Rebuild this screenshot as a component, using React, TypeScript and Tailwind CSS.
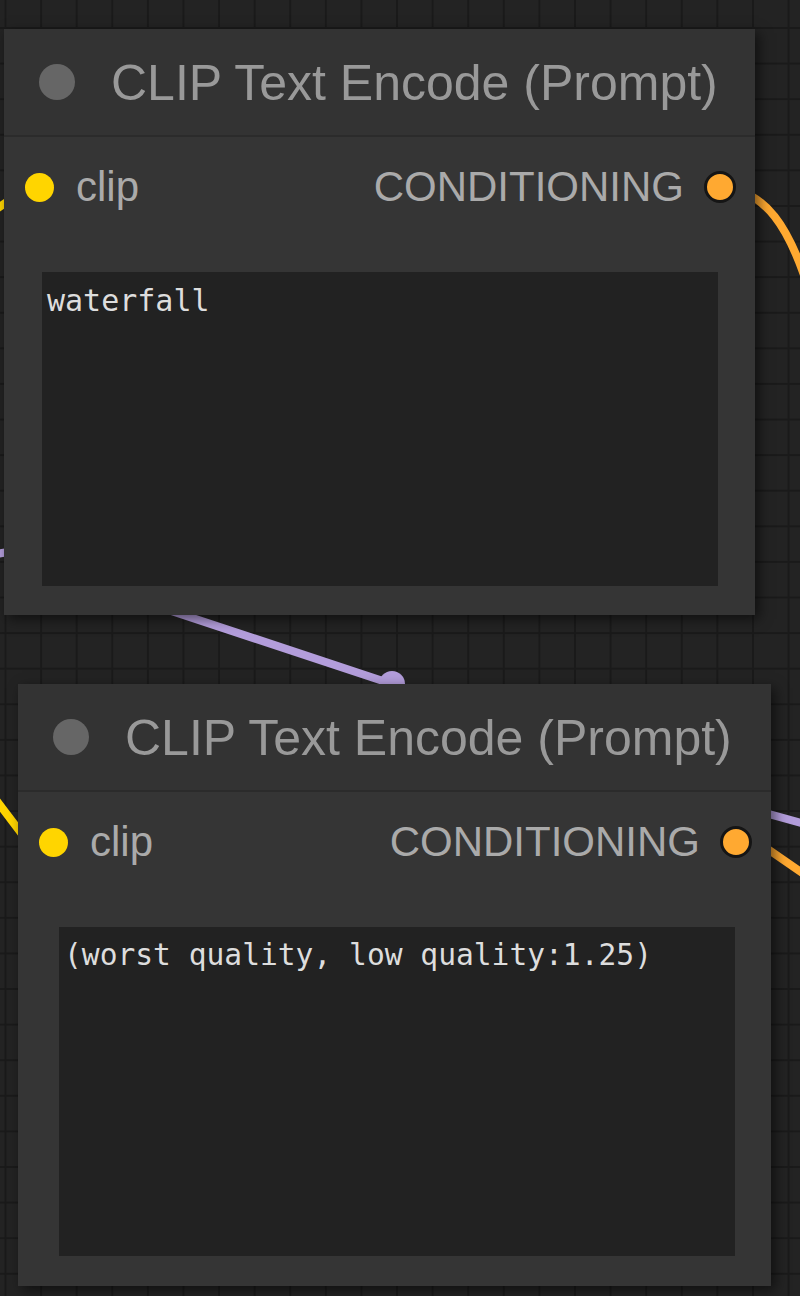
import React from "react";

type NodeProps = {
  left: number;
  top: number;
  width: number;
  boxHeight: number;
  bottomPad: number;
  boxLeft: number;
  boxRight: number;
  textSize: string;
  text: string;
};

const PromptNode = ({ left, top, width, boxHeight, bottomPad, boxLeft, boxRight, textSize, text }: NodeProps) => {
  return (
    <div
      className="absolute bg-[#353535] shadow-[4px_4px_12px_rgba(0,0,0,0.55)] flex flex-col"
      style={{ left, top, width }}
    >
      <div className="h-[108px] bg-[#333333] border-b-2 border-[#2b2b2b] flex items-center pl-[35px]">
        <div className="w-[36px] h-[36px] rounded-full bg-[#666666]" />
        <span className="ml-[36px] mt-[2px] text-[50px] leading-none text-[#999999] font-['Liberation_Sans',Arial,sans-serif] whitespace-nowrap">
          CLIP Text Encode (Prompt)
        </span>
      </div>
      <div className="mt-[15px] h-[70px] flex items-center justify-between pl-[21px] pr-[19px]">
        <div className="flex items-center">
          <div className="w-[29px] h-[29px] rounded-full bg-[#FFD500]" />
          <span className="ml-[22px] text-[42px] leading-none text-[#aaaaaa] font-['Liberation_Sans',Arial,sans-serif]">
            clip
          </span>
        </div>
        <div className="flex items-center">
          <span className="mr-[20px] text-[42px] leading-none text-[#aaaaaa] font-['Liberation_Sans',Arial,sans-serif]">
            CONDITIONING
          </span>
          <div className="w-[32px] h-[32px] rounded-full bg-[#FFA931] border-[3px] border-[#151515]" />
        </div>
      </div>
      <div className="mt-[50px]" style={{ paddingBottom: bottomPad, paddingLeft: boxLeft, paddingRight: boxRight }}>
        <div
          className={`bg-[#222222] pl-[5px] pt-[11px] ${textSize} leading-[1.2] text-[#dddddd] font-['DejaVu_Sans_Mono',monospace] whitespace-pre`}
          style={{ height: boxHeight }}
        >
          {text}
        </div>
      </div>
    </div>
  );
};

export default function App() {
  return (
    <div className="relative w-[800px] h-[1296px] overflow-hidden bg-[#232323] bg-[linear-gradient(to_right,#1a1a1a_2px,transparent_2px),linear-gradient(to_bottom,#1a1a1a_2px,transparent_2px)] bg-[length:35.6px_35.6px] bg-[position:4.5px_27px]">
      <svg className="absolute inset-0" width="800" height="1296">
        <g fill="none" strokeWidth="8" strokeLinecap="round">
          <path d="M -40 238 Q -10 212 25 190" stroke="#FFD500" />
          <path d="M -40 560 L 20 550" stroke="#B39DDB" />
          <path d="M 120 594 L 392 684" stroke="#B39DDB" />
          <path d="M 720 187 C 765 190, 790 225, 812 300" stroke="#FFA931" />
          <path d="M -25 772 L 40 858" stroke="#FFD500" />
          <path d="M 740 806 L 830 831" stroke="#B39DDB" />
          <path d="M 740 830 L 830 892" stroke="#FFA931" />
        </g>
        <circle cx="392" cy="684" r="13" fill="#B39DDB" />
      </svg>
      <PromptNode
        left={4}
        top={29}
        width={751}
        boxHeight={314}
        bottomPad={29}
        boxLeft={38}
        boxRight={37}
        textSize="text-[30px]"
        text="waterfall"
      />
      <PromptNode
        left={18}
        top={684}
        width={753}
        boxHeight={329}
        bottomPad={30}
        boxLeft={41}
        boxRight={36}
        textSize="text-[29.6px]"
        text="(worst quality, low quality:1.25)"
      />
    </div>
  );
}
